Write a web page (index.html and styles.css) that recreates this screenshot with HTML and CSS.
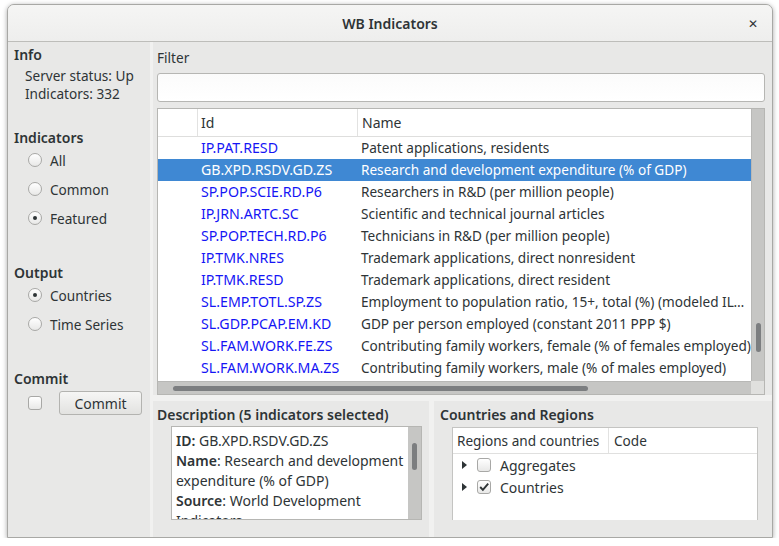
FILE: index.html
```html
<!DOCTYPE html>
<html>
<head>
<meta charset="utf-8">
<link rel="stylesheet" href="styles.css">
</head>
<body>
<div class="window">
  <div class="titlebar">
    <span class="title">WB Indicators</span>
    <span class="close">✕</span>
  </div>
  <div class="content">
    <div class="left">
      <div class="heading h-info">Info</div>
      <div class="info-line first">Server status: Up</div>
      <div class="info-line">Indicators: 332</div>
      <div class="heading h-ind">Indicators</div>
      <div class="radio r-first"><span class="rb"></span>All</div>
      <div class="radio"><span class="rb"></span>Common</div>
      <div class="radio"><span class="rb on"></span>Featured</div>
      <div class="heading h-out">Output</div>
      <div class="radio r-first"><span class="rb on"></span>Countries</div>
      <div class="radio"><span class="rb"></span>Time Series</div>
      <div class="heading h-commit">Commit</div>
      <div class="commit-row"><span class="cb"></span><button class="btn">Commit</button></div>
    </div>
    <div class="vsplit"></div>
    <div class="main">
      <div class="top">
        <div class="label">Filter</div>
        <div class="input"></div>
        <div class="table">
          <div class="tview">
            <div class="thead">
              <div class="c0"></div>
              <div class="c1 hcell">Id</div>
              <div class="c2 hcell">Name</div>
            </div>
            <div class="tbody">
              <div class="row"><div class="c0"></div><div class="c1 id">IP.PAT.RESD</div><div class="c2">Patent applications, residents</div></div>
              <div class="row sel"><div class="c0"></div><div class="c1 id">GB.XPD.RSDV.GD.ZS</div><div class="c2">Research and development expenditure (% of GDP)</div></div>
              <div class="row"><div class="c0"></div><div class="c1 id">SP.POP.SCIE.RD.P6</div><div class="c2">Researchers in R&amp;D (per million people)</div></div>
              <div class="row"><div class="c0"></div><div class="c1 id">IP.JRN.ARTC.SC</div><div class="c2">Scientific and technical journal articles</div></div>
              <div class="row"><div class="c0"></div><div class="c1 id">SP.POP.TECH.RD.P6</div><div class="c2">Technicians in R&amp;D (per million people)</div></div>
              <div class="row"><div class="c0"></div><div class="c1 id">IP.TMK.NRES</div><div class="c2">Trademark applications, direct nonresident</div></div>
              <div class="row"><div class="c0"></div><div class="c1 id">IP.TMK.RESD</div><div class="c2">Trademark applications, direct resident</div></div>
              <div class="row"><div class="c0"></div><div class="c1 id">SL.EMP.TOTL.SP.ZS</div><div class="c2 ell">Employment to population ratio, 15+, total (%) (modeled ILO estimate)</div></div>
              <div class="row"><div class="c0"></div><div class="c1 id">SL.GDP.PCAP.EM.KD</div><div class="c2">GDP per person employed (constant 2011 PPP $)</div></div>
              <div class="row"><div class="c0"></div><div class="c1 id">SL.FAM.WORK.FE.ZS</div><div class="c2">Contributing family workers, female (% of females employed)</div></div>
              <div class="row"><div class="c0"></div><div class="c1 id">SL.FAM.WORK.MA.ZS</div><div class="c2">Contributing family workers, male (% of males employed)</div></div>
            </div>
            <div class="hscroll"><div class="hthumb"></div></div>
          </div>
          <div class="vcol">
            <div class="vscroll"><div class="vthumb"></div></div>
            <div class="corner"></div>
          </div>
        </div>
      </div>
      <div class="hsplit"></div>
      <div class="bottom">
        <div class="desc">
          <div class="glabel">Description (5 indicators selected)</div>
          <div class="dbox">
            <div class="dtext">
              <div><b>ID:</b> GB.XPD.RSDV.GD.ZS</div>
              <div><b>Name</b>: Research and development expenditure (% of GDP)</div>
              <div><b>Source</b>: World Development Indicators</div>
            </div>
            <div class="dscroll"><div class="dthumb"></div></div>
          </div>
        </div>
        <div class="bsplit"></div>
        <div class="countries">
          <div class="glabel">Countries and Regions</div>
          <div class="tree">
            <div class="trhead">
              <div class="tc1">Regions and countries</div>
              <div class="tc2">Code</div>
            </div>
            <div class="trow"><span class="arrow"></span><span class="cb"></span>Aggregates</div>
            <div class="trow"><span class="arrow"></span><span class="cb checked"><svg width="12" height="12" viewBox="0 0 12 12"><path d="M2.2 6 L4.9 8.9 L10.2 2.6" fill="none" stroke="#2e3436" stroke-width="1.9"/></svg></span>Countries</div>
          </div>
        </div>
      </div>
    </div>
  </div>
</div>
</body>
</html>
```

FILE: styles.css
```css
* { box-sizing: border-box; }
html, body { margin: 0; padding: 0; }
body {
  background: #ffffff;
  font-family: "Noto Sans", "DejaVu Sans", sans-serif;
  font-size: 13.6px;
  color: #2e3436;
}
.window {
  margin: 4px 0 0 7px;
  width: 766px;
  height: 534px;
  border: 1px solid #a8a8a5;
  border-radius: 7px 7px 0 0;
  background: #e8e8e7;
  box-shadow: 0 1px 5px rgba(0,0,0,0.35);
  display: flex;
  flex-direction: column;
  overflow: hidden;
}
.titlebar {
  height: 37px;
  flex: none;
  background: linear-gradient(#f5f5f4, #eeeeed);
  border-bottom: 1px solid #bdbdba;
  position: relative;
  display: flex;
  align-items: center;
  justify-content: center;
}
.title { font-weight: 600; font-size: 14px; color: #2e3436; }
.close {
  position: absolute;
  right: 14px;
  top: 10px;
  font-size: 12px;
  font-weight: bold;
  color: #2e3436;
}
.content { flex: 1; display: flex; min-height: 0; }
.left { width: 142px; flex: none; padding: 4px 0 0 6px; }
.heading { font-weight: 600; line-height: 18px; height: 18px; font-size: 14px; }
.info-line { padding-left: 11px; line-height: 18px; height: 18px; }
.info-line.first { margin-top: 3px; }
.h-ind { margin-top: 26px; }
.h-out { margin-top: 37px; }
.h-commit { margin-top: 37px; }
.radio {
  display: flex; align-items: center;
  height: 18px; margin-top: 11px; padding-left: 14px;
}
.radio.r-first { margin-top: 4px; }
.rb {
  width: 14px; height: 14px; border-radius: 50%;
  border: 1px solid #a8a8a6;
  background: linear-gradient(#ffffff, #e8e8e7);
  margin-right: 8px; flex: none;
  display: flex; align-items: center; justify-content: center;
}
.rb.on::after {
  content: ""; width: 4px; height: 4px; border-radius: 50%; background: #2e3436;
}
.commit-row { display: flex; align-items: center; padding-left: 14px; margin-top: 3px; height: 24px; }
.cb {
  width: 14px; height: 14px; border-radius: 3px;
  border: 1px solid #a8a8a6;
  background: linear-gradient(#ffffff, #e8e8e7);
  flex: none; display: flex; align-items: center; justify-content: center;
}
.btn {
  margin-left: 17px;
  width: 83px; height: 24px;
  border: 1px solid #b3b3b0; border-radius: 3px;
  background: linear-gradient(#f6f6f5, #e2e2e0);
  font-family: inherit; font-size: 14px; color: #2e3436;
  padding: 0;
}
.vsplit {
  width: 3px; flex: none;
  background-image: radial-gradient(circle, #fafafa 0.6px, transparent 0.8px);
  background-size: 2px 2px;
}
.main { flex: 1; display: flex; flex-direction: column; min-width: 0; }
.top { height: 353px; flex: none; padding: 7px 7px 0 4px; display: flex; flex-direction: column; }
.label { line-height: 18px; height: 18px; }
.input {
  margin-top: 6px; height: 29px;
  border: 1px solid #b6b6b3; border-radius: 3px;
  background: linear-gradient(#fbfbfb, #ffffff);
}
.table {
  margin-top: 6px; height: 287px;
  border: 1px solid #b6b6b3;
  background: #ffffff;
  display: flex;
}
.tview { flex: 1; min-width: 0; display: flex; flex-direction: column; overflow: hidden; }
.thead {
  height: 28px; flex: none; display: flex;
  border-bottom: 1px solid #dededd;
}
.thead .c0, .thead .c1 { border-right: 1px solid #e2e2e1; }
.c0 { width: 40px; flex: none; }
.c1 { width: 160px; flex: none; padding-left: 3px; white-space: nowrap; }
.c2 { width: 393px; flex: none; padding-left: 3px; white-space: nowrap; overflow: hidden; }
.c2.ell { text-overflow: ellipsis; }
.hcell { line-height: 27px; font-size: 14px; }
.thead .c2 { padding-left: 4px; }
.tbody { flex: 1; overflow: hidden; }
.row { display: flex; height: 22px; line-height: 22px; }
.id { color: #1515f5; font-size: 14.2px; }
.row.sel { background: #3f88d3; color: #ffffff; }
.row.sel .id { color: #ffffff; }
.hscroll {
  height: 13px; flex: none;
  background: #c6c6c4;
  border-top: 1px solid #b8b8b6;
  position: relative;
}
.hthumb {
  position: absolute; left: 15px; top: 4px;
  width: 415px; height: 5px; border-radius: 3px;
  background: #7c7e80;
}
.vcol { width: 13px; flex: none; display: flex; flex-direction: column; }
.vscroll { flex: 1; background: #c6c6c4; border-left: 1px solid #b8b8b6; position: relative; }
.vthumb {
  position: absolute; left: 4px; top: 214px;
  width: 5px; height: 29px; border-radius: 3px;
  background: #7c7e80;
}
.corner { height: 13px; background: #e0e0de; }
.hsplit {
  height: 6px; flex: none;
  background-image: radial-gradient(circle, #fafafa 0.6px, transparent 0.8px);
  background-size: 2px 2px;
  background-position: 0 1px;
}
.bottom { flex: 1; display: flex; min-height: 0; }
.desc { width: 276px; flex: none; padding: 5px 0 0 4px; }
.glabel { font-weight: 600; line-height: 18px; height: 18px; font-size: 14px; }
.dbox {
  margin: 2px 0 0 14px; width: 251px; height: 94px;
  border: 1px solid #b6b6b3; background: #ffffff;
  display: flex; overflow: hidden;
}
.dtext { flex: 1; padding: 4px 4px 0 4px; line-height: 20px; overflow: hidden; font-size: 14px; }
.dtext b { font-weight: 600; }
.dscroll { width: 13px; flex: none; background: #c6c6c4; position: relative; }
.dthumb {
  position: absolute; left: 4px; top: 16px;
  width: 5px; height: 27px; border-radius: 3px; background: #7c7e80;
}
.bsplit {
  width: 5px; flex: none;
  background-image: radial-gradient(circle, #fafafa 0.6px, transparent 0.8px);
  background-size: 2px 2px;
}
.countries { flex: 1; padding: 5px 0 0 6px; }
.tree {
  margin: 3px 0 0 12px; width: 306px; height: 93px;
  border: 1px solid #c4c4c2; border-bottom: none; background: #ffffff;
}
.trhead { display: flex; height: 26px; border-bottom: 1px solid #e0e0df; line-height: 25px; }
.tc1 { width: 156px; padding-left: 4px; border-right: 1px solid #e2e2e1; }
.tc2 { padding-left: 5px; }
.trow { display: flex; align-items: center; height: 22px; padding-left: 9px; font-size: 14px; }
.arrow {
  width: 0; height: 0; margin-right: 10px;
  border-top: 4px solid transparent; border-bottom: 4px solid transparent;
  border-left: 5px solid #2e3436;
}
.trow .cb { margin-right: 9px; }
```
